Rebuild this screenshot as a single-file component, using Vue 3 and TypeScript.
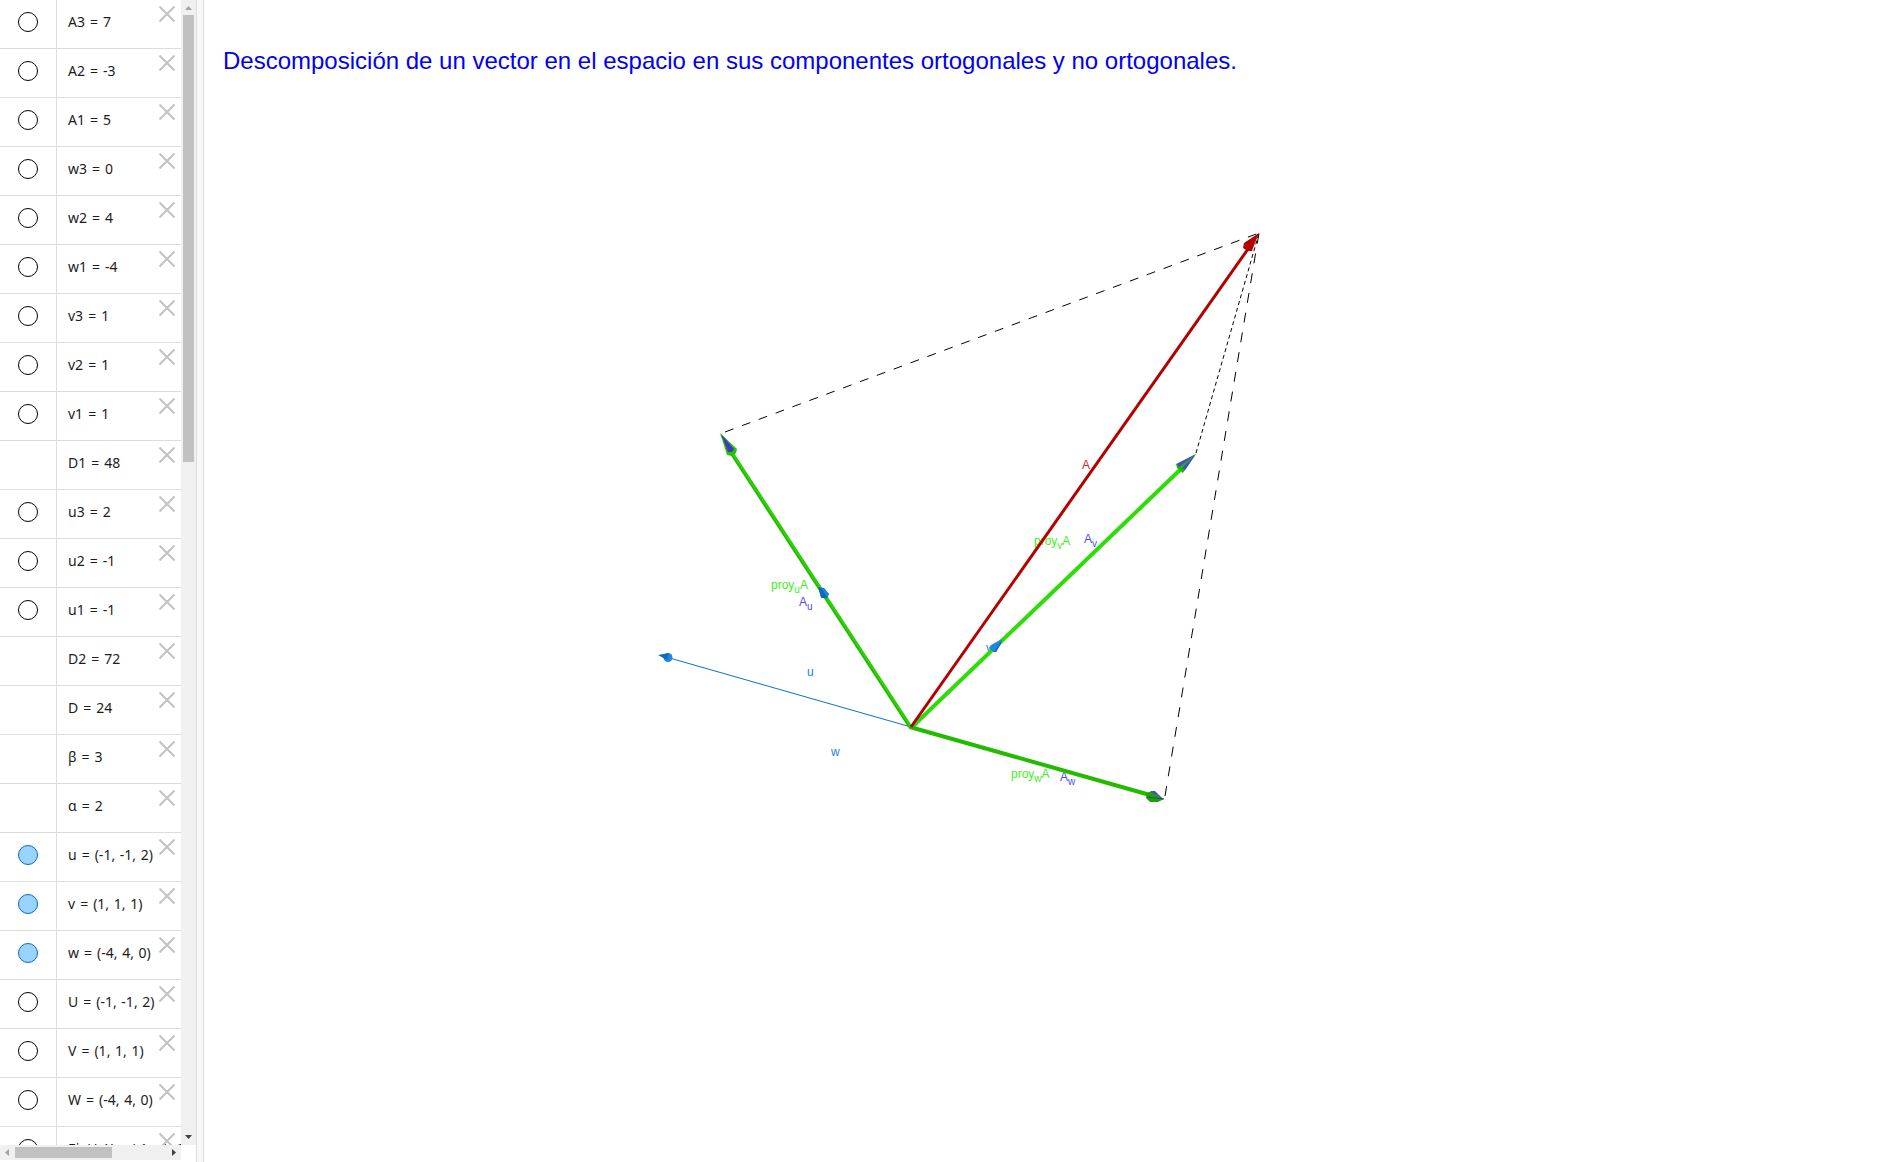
<script setup lang="ts">
interface Row {
  name: string
  value: string[]
  marble: 'off' | 'on' | 'none'
}

const rows: Row[] = [
  { name: 'A3', value: ['7'], marble: 'off' },
  { name: 'A2', value: ['-3'], marble: 'off' },
  { name: 'A1', value: ['5'], marble: 'off' },
  { name: 'w3', value: ['0'], marble: 'off' },
  { name: 'w2', value: ['4'], marble: 'off' },
  { name: 'w1', value: ['-4'], marble: 'off' },
  { name: 'v3', value: ['1'], marble: 'off' },
  { name: 'v2', value: ['1'], marble: 'off' },
  { name: 'v1', value: ['1'], marble: 'off' },
  { name: 'D1', value: ['48'], marble: 'none' },
  { name: 'u3', value: ['2'], marble: 'off' },
  { name: 'u2', value: ['-1'], marble: 'off' },
  { name: 'u1', value: ['-1'], marble: 'off' },
  { name: 'D2', value: ['72'], marble: 'none' },
  { name: 'D', value: ['24'], marble: 'none' },
  { name: 'β', value: ['3'], marble: 'none' },
  { name: 'α', value: ['2'], marble: 'none' },
  { name: 'u', value: ['(-1, ', '-1, ', '2)'], marble: 'on' },
  { name: 'v', value: ['(1, ', '1, ', '1)'], marble: 'on' },
  { name: 'w', value: ['(-4, ', '4, ', '0)'], marble: 'on' },
  { name: 'U', value: ['(-1, ', '-1, ', '2)'], marble: 'off' },
  { name: 'V', value: ['(1, ', '1, ', '1)'], marble: 'off' },
  { name: 'W', value: ['(-4, ', '4, ', '0)'], marble: 'off' },
  { name: 'EjeU: X', value: ['(-1, ', '-1, ', '2)'], marble: 'off' },
]

interface Label {
  x: number
  y: number
  text: string
  sub?: string
  tail?: string
  tone: string
}

const labels: Label[] = [
  { x: 771, y: 589, text: 'proy', sub: 'u', tail: 'A', tone: 'green' },
  { x: 799, y: 606, text: 'A', sub: 'u', tone: 'violet' },
  { x: 807, y: 676, text: 'u', tone: 'blue' },
  { x: 831, y: 756, text: 'w', tone: 'blue' },
  { x: 986, y: 652, text: 'v', tone: 'blue' },
  { x: 1082, y: 469, text: 'A', tone: 'red' },
  { x: 1034, y: 545, text: 'proy', sub: 'v', tail: 'A', tone: 'green' },
  { x: 1084, y: 543, text: 'A', sub: 'v', tone: 'violet' },
  { x: 1011, y: 778, text: 'proy', sub: 'w', tail: 'A', tone: 'green' },
  { x: 1060, y: 781, text: 'A', sub: 'w', tone: 'violet' },
]
</script>

<template>
  <div class="app">
    <aside class="algebra">
      <div class="viewport">
        <ul class="list">
          <li v-for="row in rows" :key="row.name" class="row">
            <div class="marble-cell">
              <input
                v-if="row.marble !== 'none'"
                class="marble"
                type="checkbox"
                :checked="row.marble === 'on'"
                :aria-label="row.name"
              />
            </div>
            <div class="formula">
              {{ row.name }}<span class="eq">=</span><span v-for="(part, i) in row.value" :key="i" class="part">{{ part }}</span>
            </div>
            <button class="remove" type="button" :aria-label="'Borrar ' + row.name">
              <svg width="16" height="16" viewBox="0 0 16 16">
                <path d="M0.5 0.5L15.5 15.5M15.5 0.5L0.5 15.5" />
              </svg>
            </button>
          </li>
        </ul>
      </div>
      <div class="bar-v">
        <svg class="tip" width="15" height="15" viewBox="0 0 15 15"><path class="dim" d="M4 10L7.500 6L11 10Z" /></svg>
        <div class="thumb-v"></div>
        <svg class="tip end" width="15" height="15" viewBox="0 0 15 15"><path d="M4 5L11 5L7.500 9Z" /></svg>
      </div>
      <div class="bar-h">
        <svg class="tip" width="15" height="15" viewBox="0 0 15 15"><path class="dim" d="M9 4L5 7.500L9 11Z" /></svg>
        <div class="thumb-h"></div>
        <svg class="tip end" width="15" height="15" viewBox="0 0 15 15"><path d="M6 4L10 7.500L6 11Z" /></svg>
      </div>
    </aside>
    <div class="splitter"></div>
    <main class="view">
      <h1 class="title">Descomposición de un vector en el espacio en sus componentes ortogonales y no ortogonales.</h1>
      <svg class="scene" viewBox="204 100 1686 1062" preserveAspectRatio="xMidYMin meet">
        <g class="guides">
          <path d="M725 432L1259 233" stroke-dasharray="9 9" />
          <path d="M1165 796L1259 233" stroke-dasharray="10 10" />
          <path d="M1196 453L1259 233" stroke-dasharray="4 3" />
        </g>

        <text v-for="(l, i) in labels" :key="i" class="label" :class="l.tone" :x="l.x" :y="l.y">{{ l.text
          }}<tspan v-if="l.sub" class="sub" dy="4">{{ l.sub }}</tspan><tspan v-if="l.tail" dy="-4">{{ l.tail }}</tspan></text>

        <path d="M911 727L666 657" stroke="#0b72c4" stroke-width="1" />
        <circle cx="668" cy="657.500" r="4.500" fill="#2288dd" />
        <path d="M658 655L669 653L667 660Z" fill="#0b6cb8" />

        <path d="M911 728L729 449" stroke="#22b800" stroke-width="4" />
        <path d="M911 727L729 448" stroke="#28d600" stroke-width="2" />
        <path d="M720 433L737 449L736 453L732 456L727 455Z" fill="#26c400" />
        <path d="M721 434L734 449L732 452L728 452Z" fill="#4238c8" />
        <path d="M818 587L824 588L829 594L827 598L821 598Z" fill="#0b6cb8" />
        <path d="M821 587L829 594L827 597Z" fill="#2288dd" />

        <path d="M911 728L1183 467" stroke="#2cdd06" stroke-width="4" />
        <path d="M1196 454L1176 464L1177 468L1183 473Z" fill="#22b800" />
        <path d="M1196 454L1177 464L1179 467ZM1196 454L1182 468L1185 470Z" fill="#4b44dd" />
        <path d="M1002 639L991 645L989 648L993 652L996 652Z" fill="#2288dd" />
        <path d="M1002 640L1001 644L996 652L994 652Z" fill="#0b6cb8" />

        <path d="M910 727L1150 795" stroke="#22bb00" stroke-width="4" />
        <path d="M1164 799L1152 791L1147 793L1146 798L1150 802L1158 802Z" fill="#1fa204" />
        <path d="M1163 799L1150 791L1155 791Z" fill="#4b44ee" />
        <path d="M1164 799L1147 797" stroke="#3b38b0" stroke-width="1" />

        <path d="M911 727L1248 249" stroke="#b50000" stroke-width="3" />
        <path d="M1259 233L1244 243L1243 248L1248 251L1252 251L1253 248Z" fill="#b50000" />
      </svg>
    </main>
  </div>
</template>

<style>
body {
  margin: 0;
}
</style>

<style scoped>
.app {
  display: flex;
  height: 100vh;
  overflow: hidden;
  background: #fff;
}

.algebra {
  display: grid;
  grid-template-columns: 181px 15px;
  grid-template-rows: minmax(0, 1fr) 15px;
  flex: none;
  padding-bottom: 2px;
}

.viewport {
  overflow: hidden;
}

.list {
  margin: 0;
  padding: 0;
  list-style: none;
}

.row {
  display: flex;
  box-sizing: border-box;
  height: 49px;
  border-bottom: 1px solid #dcdcdc;
}

.marble-cell {
  display: flex;
  flex: none;
  justify-content: center;
  box-sizing: border-box;
  width: 57px;
  padding-top: 12px;
  border-right: 1px solid #dcdcdc;
}

.marble {
  appearance: none;
  box-sizing: border-box;
  width: 20px;
  height: 20px;
  margin: 0;
  border: 1px solid #000;
  border-radius: 50%;
  background: #fff;
}

.marble:checked {
  border-color: #0b6cc0;
  background: #99d4ff;
}

.formula {
  flex: 1;
  min-width: 0;
  padding-left: 11px;
  font: 14px/44px "Noto Sans", sans-serif;
  color: #1c1c1c;
  white-space: nowrap;
}

.eq {
  margin: 0 5px;
}

.part + .part {
  margin-left: 1px;
}

.remove {
  flex: none;
  width: 28px;
  height: 28px;
  margin: 0 0 0 -28px;
  padding: 6px;
  border: 0;
  background: none;
}

.remove svg {
  display: block;
  fill: none;
  stroke: #c2c2c2;
  stroke-width: 2;
}

.bar-v {
  display: flex;
  flex-direction: column;
  background: #f0f0f0;
}

.bar-h {
  display: flex;
  background: #f0f0f0;
}

.tip {
  display: block;
  flex: none;
  fill: #404040;
}

.dim {
  fill: #a3a3a3;
}

.end {
  margin-top: auto;
}

.bar-h .end {
  margin-top: 0;
  margin-left: auto;
}

.thumb-v {
  height: 39%;
  margin: 0 2px;
  background: #c1c1c1;
}

.thumb-h {
  width: 97px;
  margin: 2px 0;
  background: #c1c1c1;
}

.splitter {
  flex: none;
  width: 6px;
  border: solid #dcdcdc;
  border-width: 0 1px;
  background: #f8f8f8;
}

.view {
  display: flex;
  flex: 1;
  flex-direction: column;
  min-width: 0;
}

.title {
  box-sizing: border-box;
  min-height: 100px;
  margin: 0;
  padding: 47px 19px 25px;
  font: 24px/28px "Liberation Sans", sans-serif;
  color: #0000f5;
}

.scene {
  display: block;
  width: 100%;
  fill: none;
}

.guides path {
  stroke: #000;
  stroke-width: 1;
}

.label {
  font: 12px "Liberation Sans", sans-serif;
}

.sub {
  font-size: 10px;
}

.green {
  fill: #42ee20;
}

.violet {
  fill: #4c4cfa;
}

.blue {
  fill: #1c80d8;
}

.red {
  fill: #c82828;
}
</style>
